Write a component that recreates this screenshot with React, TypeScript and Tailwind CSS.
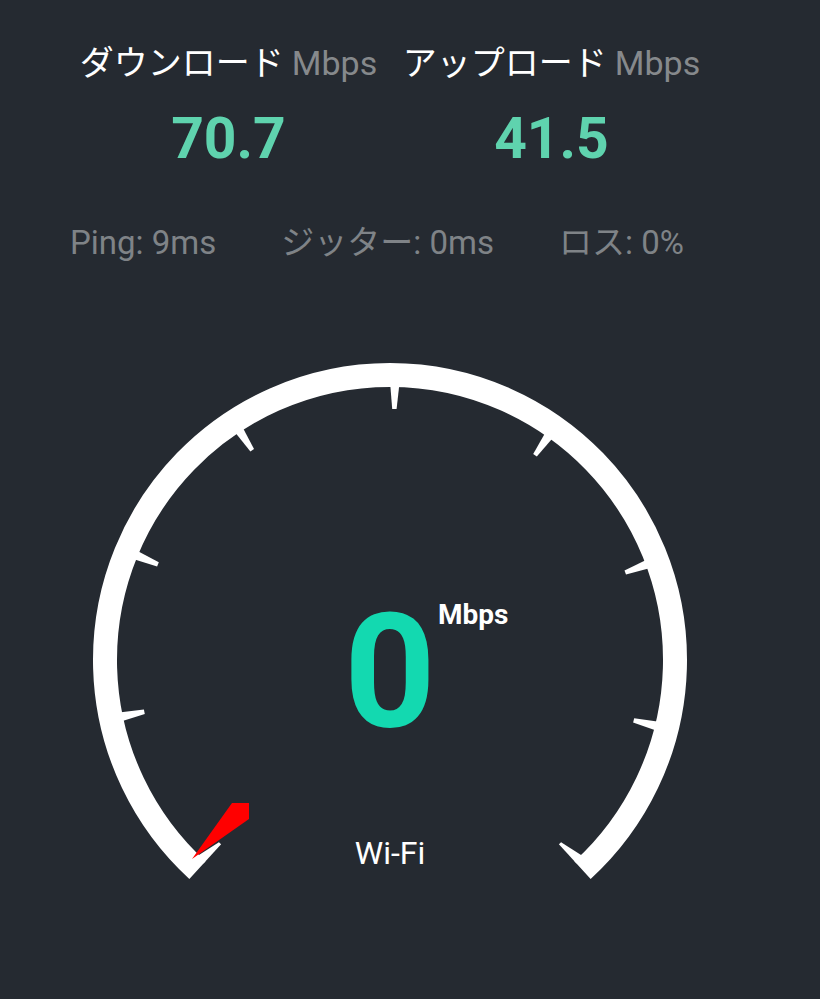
const CX = 390
const CY = 320
const END = 137.5

function pt(deg: number, r: number, w = 0): [number, number] {
  const a = (deg * Math.PI) / 180
  const ux = Math.sin(a)
  const uy = -Math.cos(a)
  const vx = Math.cos(a)
  const vy = Math.sin(a)
  return [CX + r * ux + w * vx, CY + r * uy + w * vy]
}

function poly(list: [number, number][]) {
  return list.map(p => p[0].toFixed(1) + "," + p[1].toFixed(1)).join(" ")
}

function Gauge() {
  const r = 285
  const [sx, sy] = pt(-END, r)
  const [ex, ey] = pt(END, r)
  const arc = `M ${sx} ${sy} A ${r} ${r} 0 1 1 ${ex} ${ey}`

  const ticks = [-3, -2, -1, 0, 1, 2, 3].map(k => {
    const d = 1 + k * 34.3
    return poly([pt(d, 276, -4.6), pt(d, 251, -2.2), pt(d, 251, 2.2), pt(d, 276, 4.6)])
  })

  const rightFlap = poly([pt(END, 276, 0), pt(END, 250, 0), pt(END, 250, -3), pt(END, 276, -10)])
  const leftFlap = poly([pt(-END, 276, 0), pt(-END, 250, 0), pt(-END, 250, 3), pt(-END, 276, 10)])

  return (
    <svg width="820" height="560" viewBox="0 0 820 560" className="block">
      <path d={arc} stroke="#ffffff" strokeWidth={24} fill="none" />
      {ticks.map((t, i) => (
        <polygon key={i} points={t} fill="#ffffff" />
      ))}
      <polygon points={rightFlap} fill="#ffffff" />
      <polygon points={leftFlap} fill="#ffffff" />
      <polygon points="232,463 249,463 249,479 192,519" fill="#ff0000" />
    </svg>
  )
}

export default function App() {
  return (
    <div className="w-[820px] h-[999px] overflow-hidden bg-[#252a31] font-['Roboto','Noto_Sans_CJK_JP',sans-serif]">
      <div className="ml-[67px] w-[646px] grid grid-cols-2 mt-[46px]">
        <div className="flex justify-center text-[34px] leading-none whitespace-nowrap">
          <span className="text-white">ダウンロード</span>
          <span className="text-[#86898c] ml-[8px]">Mbps</span>
        </div>
        <div className="flex justify-center text-[34px] leading-none whitespace-nowrap">
          <span className="text-white">アップロード</span>
          <span className="text-[#86898c] ml-[8px]">Mbps</span>
        </div>
      </div>

      <div className="ml-[67px] w-[646px] grid grid-cols-2 mt-[30px]">
        <div className="text-center text-[57px] leading-none font-bold text-[#5fd3ae]">70.7</div>
        <div className="text-center text-[57px] leading-none font-bold text-[#5fd3ae]">41.5</div>
      </div>

      <div className="flex pl-[70px] gap-[65px] mt-[59px] text-[33px] leading-none text-[#7f8387] whitespace-nowrap">
        <span>Ping: 9ms</span>
        <span>ジッター: 0ms</span>
        <span>ロス: 0%</span>
      </div>

      <div className="relative mt-[81px]">
        <Gauge />
        <div className="absolute left-0 top-[252px] w-[780px] text-center text-[160px] leading-none font-bold text-[#13d9b0]">0</div>
        <div className="absolute left-[438px] top-[261px] text-[28px] leading-none font-bold text-white">Mbps</div>
        <div className="absolute left-0 top-[497px] w-[780px] text-center text-[32px] leading-none text-white">Wi-Fi</div>
      </div>
    </div>
  )
}
